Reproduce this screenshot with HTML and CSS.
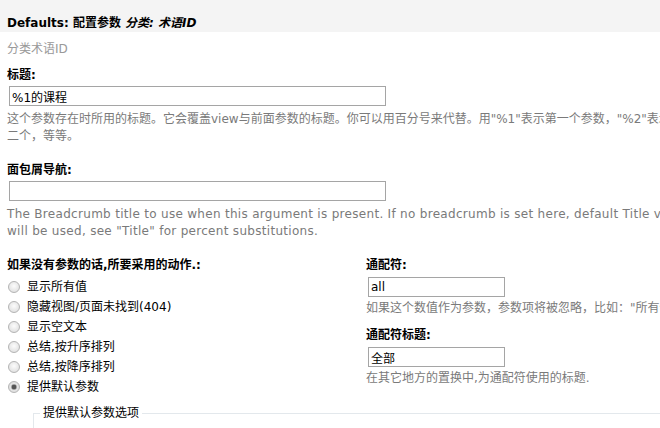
FILE: index.html
```html
<!DOCTYPE html>
<html lang="zh-CN">
<head>
    <meta charset="UTF-8">
    <title>Defaults: 配置参数</title>
    <link rel="stylesheet" href="styles.css">
</head>
<body>
    <div class="page">
        <h2 class="title">Defaults: 配置参数 <em>分类: 术语ID</em></h2>

        <div class="form">
            <div class="sub">分类术语ID</div>

            <div class="field">
                <label for="title">标题:</label>
                <input type="text" id="title" class="wide" value="%1的课程">
                <div class="desc zh">这个参数存在时所用的标题。它会覆盖view与前面参数的标题。你可以用百分号来代替。用"%1"表示第一个参数，"%2"表示第二个，等等。</div>
            </div>

            <div class="field">
                <label for="crumb">面包屑导航:</label>
                <input type="text" id="crumb" class="wide" value="">
                <div class="desc en">The Breadcrumb title to use when this argument is present. If no breadcrumb is set here, default Title values will be used, see "Title" for percent substitutions.</div>
            </div>

            <div class="cols">
                <div class="col-left">
                    <label class="head">如果没有参数的话,所要采用的动作.:</label>
                    <div class="radios">
                        <label class="radio"><input type="radio" name="action"> 显示所有值</label>
                        <label class="radio"><input type="radio" name="action"> 隐藏视图/页面未找到(404)</label>
                        <label class="radio"><input type="radio" name="action"> 显示空文本</label>
                        <label class="radio"><input type="radio" name="action"> 总结,按升序排列</label>
                        <label class="radio"><input type="radio" name="action"> 总结,按降序排列</label>
                        <label class="radio"><input type="radio" name="action" checked> 提供默认参数</label>
                    </div>
                </div>

                <div class="col-right">
                    <div class="field small">
                        <label for="wild">通配符:</label>
                        <input type="text" id="wild" class="short" value="all">
                        <div class="desc">如果这个数值作为参数，参数项将被忽略，比如："所有值"。</div>
                    </div>
                    <div class="field small">
                        <label for="wildtitle">通配符标题:</label>
                        <input type="text" id="wildtitle" class="short" value="全部">
                        <div class="desc">在其它地方的置换中,为通配符使用的标题.</div>
                    </div>
                </div>
            </div>

            <fieldset class="defaults">
                <legend>提供默认参数选项</legend>
            </fieldset>
        </div>
    </div>
</body>
</html>
```

FILE: styles.css
```css
html, body {
    margin: 0;
    padding: 0;
    overflow: hidden;
    background: #fff;
}

body {
    font-family: "DejaVu Sans", "Noto Sans CJK SC", sans-serif;
    font-size: 12px;
    line-height: 17px;
    color: #000;
}

.page {
    width: 720px;
}

.title {
    margin: 0;
    height: 32px;
    box-sizing: border-box;
    padding: 15px 7px 0;
    background: #f4f4f4;
    font-size: 12px;
    line-height: 17px;
    font-weight: bold;
}

.title em {
    font-style: italic;
}

.form {
    padding: 9px 7px 0;
}

.sub {
    color: #999;
    margin-bottom: 9px;
}

.field {
    margin-bottom: 17px;
}

.field label,
.head {
    display: block;
    font-weight: bold;
}

.field label {
    margin-bottom: 2px;
}

input[type="text"] {
    display: block;
    box-sizing: border-box;
    height: 20px;
    margin: 0 0 1px 2px;
    padding: 0 2px;
    border: 1px solid #a5a5a5;
    font-family: "DejaVu Sans", "Noto Sans CJK SC", sans-serif;
    font-size: 12px;
    color: #000;
}

.wide {
    width: 377px;
}

.short {
    width: 137px;
}

.desc {
    color: #7a7a7a;
    margin-top: 5px;
}

.desc.zh {
    max-width: 686px;
}

.desc.en {
    letter-spacing: 0.3px;
}

.cols {
    display: flex;
    margin-top: 2px;
}

.col-left {
    width: 359px;
}

.col-right {
    flex: 1;
}

.field.small {
    margin-bottom: 10px;
}

.field.small label {
    margin-bottom: 3px;
}

.field.small .desc {
    margin-top: 3px;
}

.radios {
    display: flex;
    flex-direction: column;
    padding-top: 3px;
}

.radio {
    display: flex;
    align-items: center;
    gap: 7px;
    height: 20px;
}

.radio input {
    appearance: none;
    margin: 0 0 0 1px;
    width: 12px;
    height: 12px;
    border: 1px solid #b4b4b4;
    border-radius: 50%;
    background: radial-gradient(circle at 50% 40%, #fcfcfc 0, #e4e4e4 70%, #d8d8d8 100%);
}

.radio input:checked {
    background: radial-gradient(circle, #555 0, #555 2px, #aaa 2.6px, #e4e4e4 3.5px, #d8d8d8 100%);
}

.defaults {
    margin: 8px 0 0 26px;
    padding: 0 6px 20px;
    border: 0;
    border-top: 1px solid #e3e8ec;
    border-left: 1px solid #e3e8ec;
}

.defaults legend {
    padding: 0 3px;
}
```
